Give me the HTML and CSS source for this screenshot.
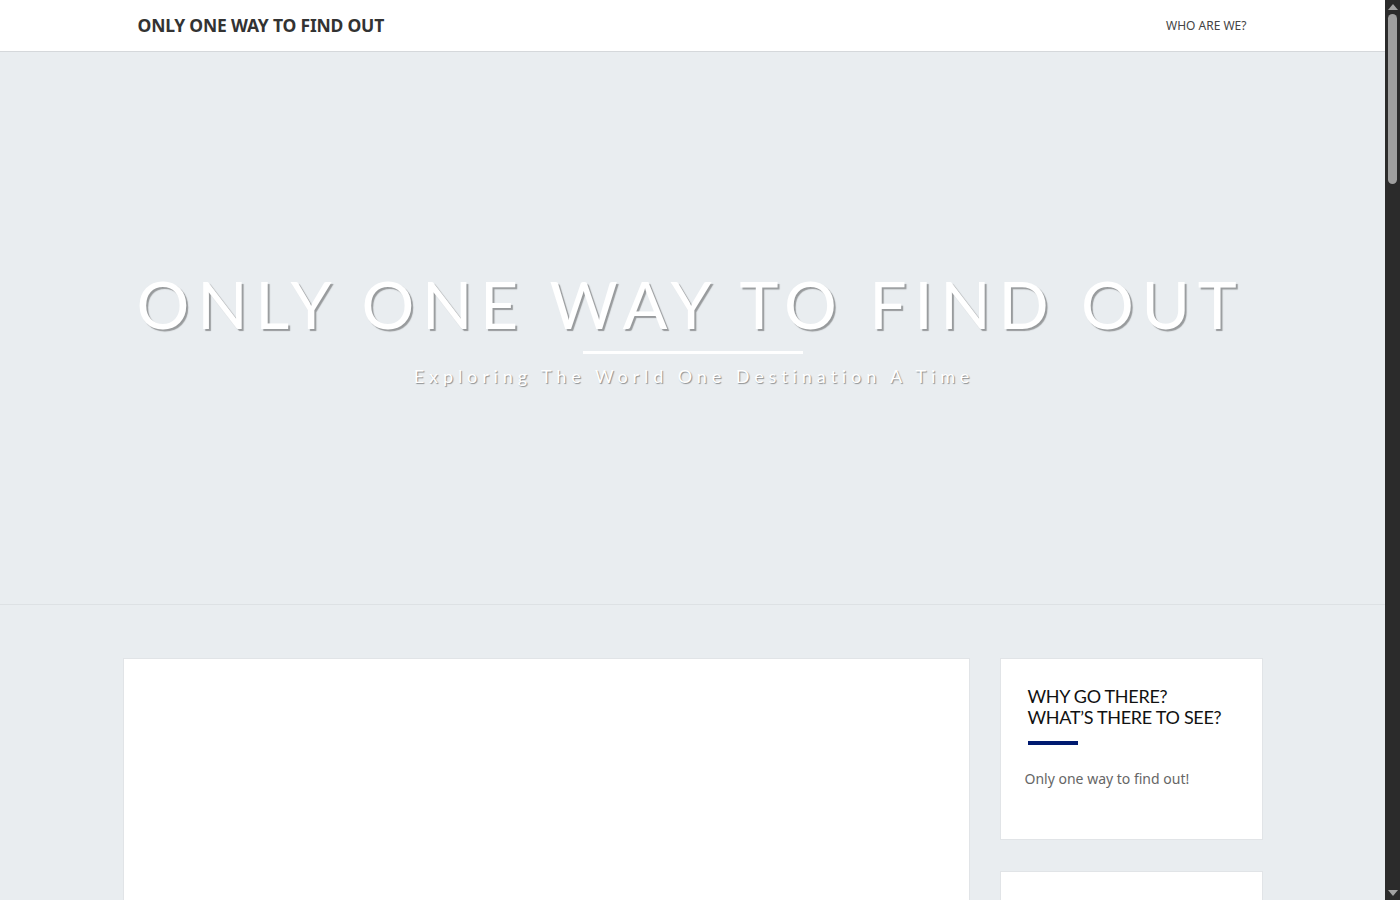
FILE: index.html
```html
<!DOCTYPE html>
<html lang="en">
<head>
    <meta charset="UTF-8">
    <meta name="viewport" content="width=device-width, initial-scale=1.0">
    <title>Only One Way To Find Out</title>
    <link rel="stylesheet" href="styles.css">
</head>
<body>
    <header class="site-header">
        <div class="header-inner">
            <a href="#" class="brand">ONLY ONE WAY TO FIND OUT</a>
            <nav class="menu">
                <a href="#">WHO ARE WE?</a>
            </nav>
        </div>
    </header>

    <section class="hero">
        <h1 class="hero-title">ONLY ONE WAY TO FIND OUT</h1>
        <div class="hero-line"></div>
        <p class="hero-tagline">Exploring The World One Destination A Time</p>
    </section>

    <div class="content">
        <main class="main-col">
            <article class="card post"></article>
        </main>
        <aside class="sidebar">
            <div class="card widget">
                <h3 class="widget-title">WHY GO THERE?<br>WHAT’S THERE TO SEE?</h3>
                <p>Only one way to find out!</p>
            </div>
            <div class="card widget widget-empty"></div>
        </aside>
    </div>

    <!-- scrollbar drawn by hand, the screenshot browser hides the real one -->
    <div class="scrollbar">
        <span class="arrow up"></span>
        <span class="thumb"></span>
        <span class="arrow down"></span>
    </div>
</body>
</html>
```

FILE: styles.css
```css
body {
    margin: 0 15px 0 0;
    font-family: Lato, "Noto Sans", sans-serif;
    background-color: #e9edf0;
    color: #555;
}
a {
    text-decoration: none;
}
.site-header {
    background: #fff;
    border-bottom: 1px solid #d5d8db;
    height: 51px;
}
.header-inner {
    width: 1110px;
    margin: 0 auto;
    padding: 0 15px;
    height: 51px;
    display: flex;
    justify-content: space-between;
    align-items: center;
}
.brand {
    font-family: "Noto Sans", sans-serif;
    font-weight: 700;
    font-size: 17.5px;
    color: #333;
    letter-spacing: -0.2px;
    margin-bottom: 1px;
}
.menu a {
    display: block;
    font-family: "Noto Sans", sans-serif;
    font-size: 12px;
    color: #444;
    margin: 0 1px 1px 0;
}
.hero {
    height: 553px;
    border-bottom: 1px solid #dde1e4;
    display: flex;
    flex-direction: column;
    align-items: center;
    justify-content: center;
    padding-top: 2px;
    box-sizing: border-box;
}
.hero-title {
    margin: 0;
    font-family: Lato, sans-serif;
    font-weight: 400;
    font-size: 66px;
    letter-spacing: 7.7px;
    color: #fff;
    text-shadow: 2px 2px 1px rgba(0, 0, 0, 0.35);
    line-height: 1;
    padding-right: 4px;
}
.hero-line {
    width: 220px;
    height: 3px;
    background: #fff;
    margin: 14px 0 11px;
}
.hero-tagline {
    margin: 0;
    font-family: Lato, sans-serif;
    font-size: 18px;
    letter-spacing: 4.9px;
    color: #fff;
    text-shadow: 1px 1px 1px rgba(0, 0, 0, 0.4);
    padding-left: 3px;
}
.content {
    width: 1140px;
    margin: 53px auto 0;
    display: flex;
    gap: 30px;
    align-items: flex-start;
}
.main-col {
    width: 847px;
}
.sidebar {
    width: 263px;
    display: flex;
    flex-direction: column;
    gap: 31px;
}
.card {
    background: #fff;
    border: 1px solid #e1e4e7;
    box-sizing: border-box;
}
.post {
    height: 500px;
}
.widget {
    height: 182px;
    padding: 27px 8px 0 27px;
}
.widget-title {
    margin: 0;
    font-family: Lato, sans-serif;
    font-weight: 400;
    font-size: 18px;
    letter-spacing: -0.3px;
    line-height: 21px;
    color: #111;
}
.widget-title::after {
    content: "";
    display: block;
    width: 50px;
    height: 4px;
    background: #001a70;
    margin-top: 13px;
}
.widget p {
    margin: 24px 0 0 -3px;
    font-family: "Noto Sans", sans-serif;
    font-size: 14px;
    color: #666;
}
.widget-empty {
    height: 100px;
}
.scrollbar {
    position: fixed;
    top: 0;
    right: 0;
    width: 15px;
    height: 100%;
    background: #2b2b2b;
    display: flex;
    flex-direction: column;
    align-items: center;
}
.thumb {
    width: 9px;
    height: 170px;
    background: #9f9f9f;
    border-radius: 5px;
    margin: 4px 0 auto;
}
.arrow {
    width: 0;
    height: 0;
    border-left: 5px solid transparent;
    border-right: 5px solid transparent;
}
.arrow.up {
    border-bottom: 6px solid #a3a3a3;
    margin-top: 4px;
}
.arrow.down {
    border-top: 6px solid #a3a3a3;
    margin-bottom: 4px;
}
```
